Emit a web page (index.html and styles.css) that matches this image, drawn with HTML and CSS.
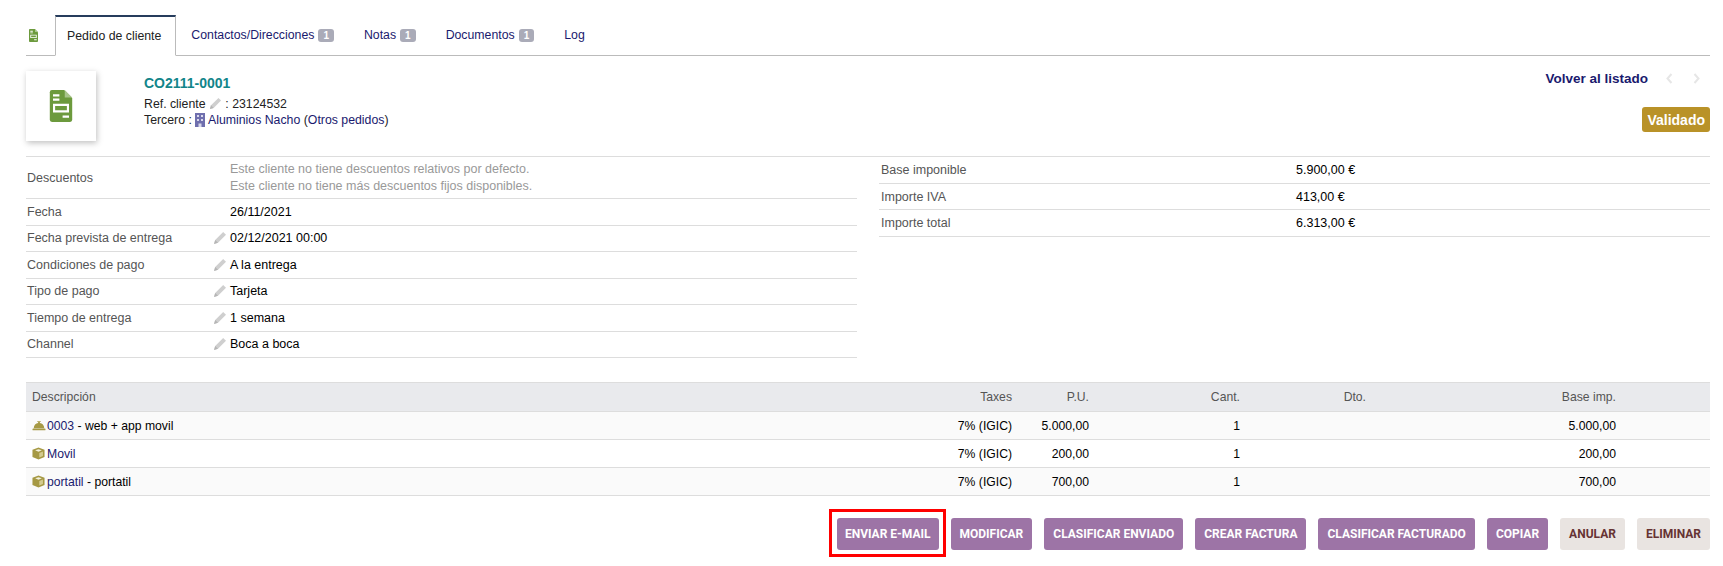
FILE: index.html
```html
<!DOCTYPE html>
<html lang="es">
<head>
    <meta charset="UTF-8">
    <title>CO2111-0001</title>
    <link rel="stylesheet" href="styles.css">
</head>
<body>
    <svg class="sprites" width="0" height="0">
        <symbol id="pencil" viewBox="0 0 14 14"><path d="M10.200 1 13 3.800 5 11.800 1 13 2.200 9Z" fill="#cfcfcf"/><path d="M2.200 9 5 11.800 1 13Z" fill="#b5b5b5"/></symbol>
        <symbol id="cube" viewBox="0 0 14 14"><path d="M7 .5 13.500 3V10.800L7 13.500 .5 10.800V3Z" fill="#a69944"/><path d="M3.400 3.600 7 2.400 10.600 3.600 7 5Z" fill="#f4f1dc"/><path d="M7.800 6.400 11.800 4.900V9.700L7.800 11.400Z" fill="#d4cb90"/></symbol>
        <symbol id="bell" viewBox="0 0 16 12"><path d="M2 9C2 5.600 4.400 3.300 7 3V2H6V1H10V2H9V3C11.600 3.300 14 5.600 14 9Z" fill="#a69944"/><rect x="0.500" y="9.500" width="15" height="2" rx="1" fill="#a69944"/></symbol>
        <symbol id="doc" viewBox="0 0 21 30"><path d="M0 2Q0 0 2 0H13.500L21 7.500V28Q21 30 19 30H2Q0 30 0 28Z" fill="#6c9a3d"/><path d="M14 0 21 7H14Z" fill="#a9c58c"/><path d="M3 4H9V6H3ZM3 8H9V10H3ZM3 13H18V21H3ZM12 24H18V26H12Z" fill="#fff"/><rect x="5" y="15" width="11" height="4" fill="#6c9a3d"/></symbol>
        <symbol id="chevron" viewBox="0 0 7 11"><path d="M5.500 1 1.500 5.500 5.500 10" fill="none" stroke="#e6e6e6" stroke-width="2"/></symbol>
    </svg>

    <main class="page">
        <nav class="tabs">
            <span class="tab-icon"><svg class="icon-tab"><use href="#doc"/></svg></span>
            <a class="tab tab-active">Pedido de cliente</a>
            <a class="tab">Contactos/Direcciones <span class="badge">1</span></a>
            <a class="tab">Notas <span class="badge">1</span></a>
            <a class="tab">Documentos <span class="badge">1</span></a>
            <a class="tab">Log</a>
        </nav>

        <section class="banner">
            <div class="logo-box"><svg class="icon-logo"><use href="#doc"/></svg></div>
            <div class="ref-block">
                <div class="ref-title">CO2111-0001</div>
                <div class="ref-line">Ref. cliente <svg class="icon-pencil"><use href="#pencil"/></svg> : 23124532</div>
                <div class="ref-line">Tercero :
                    <svg class="icon-building" viewBox="0 0 12 14"><rect x="1" width="10" height="14" fill="#6f6fae"/><path d="M3 2h2v2H3zM7 2h2v2H7zM3 6h2v2H3zM7 6h2v2H7zM4.500 10.500h3V14h-3z" fill="#d9d9ec"/></svg>
                    <a class="link">Aluminios Nacho</a> (<a class="link">Otros pedidos</a>)
                </div>
            </div>
            <div class="status-block">
                <div class="back-row">
                    <a class="back-link">Volver al listado</a>
                    <svg class="pager"><use href="#chevron"/></svg>
                    <svg class="pager pager-next"><use href="#chevron"/></svg>
                </div>
                <span class="status">Validado</span>
            </div>
        </section>

        <section class="columns">
            <div class="fields">
                <div class="field field-tall">
                    <span class="field-label">Descuentos</span>
                    <span class="field-value muted">Este cliente no tiene descuentos relativos por defecto.<br>Este cliente no tiene más descuentos fijos disponibles.</span>
                </div>
                <div class="field">
                    <span class="field-label">Fecha</span>
                    <span class="field-value">26/11/2021</span>
                </div>
                <div class="field">
                    <span class="field-label">Fecha prevista de entrega</span>
                    <svg class="icon-edit"><use href="#pencil"/></svg>
                    <span class="field-value">02/12/2021 00:00</span>
                </div>
                <div class="field">
                    <span class="field-label">Condiciones de pago</span>
                    <svg class="icon-edit"><use href="#pencil"/></svg>
                    <span class="field-value">A la entrega</span>
                </div>
                <div class="field">
                    <span class="field-label">Tipo de pago</span>
                    <svg class="icon-edit"><use href="#pencil"/></svg>
                    <span class="field-value">Tarjeta</span>
                </div>
                <div class="field">
                    <span class="field-label">Tiempo de entrega</span>
                    <svg class="icon-edit"><use href="#pencil"/></svg>
                    <span class="field-value">1 semana</span>
                </div>
                <div class="field">
                    <span class="field-label">Channel</span>
                    <svg class="icon-edit"><use href="#pencil"/></svg>
                    <span class="field-value">Boca a boca</span>
                </div>
            </div>

            <div class="totals">
                <div class="total-row"><span class="total-label">Base imponible</span><span>5.900,00 €</span></div>
                <div class="total-row"><span class="total-label">Importe IVA</span><span>413,00 €</span></div>
                <div class="total-row"><span class="total-label">Importe total</span><span>6.313,00 €</span></div>
            </div>
        </section>

        <table class="lines">
            <thead>
                <tr>
                    <th class="col-desc">Descripción</th>
                    <th class="col-tax">Taxes</th>
                    <th class="col-pu">P.U.</th>
                    <th class="col-qty">Cant.</th>
                    <th class="col-dto">Dto.</th>
                    <th class="col-base">Base imp.</th>
                    <th></th>
                </tr>
            </thead>
            <tbody>
                <tr>
                    <td class="col-desc"><svg class="icon-bell"><use href="#bell"/></svg><a class="link">0003</a> - web + app movil</td>
                    <td class="col-tax">7% (IGIC)</td>
                    <td class="col-pu">5.000,00</td>
                    <td class="col-qty">1</td>
                    <td class="col-dto"></td>
                    <td class="col-base">5.000,00</td>
                    <td></td>
                </tr>
                <tr>
                    <td class="col-desc"><svg class="icon-cube"><use href="#cube"/></svg><a class="link">Movil</a></td>
                    <td class="col-tax">7% (IGIC)</td>
                    <td class="col-pu">200,00</td>
                    <td class="col-qty">1</td>
                    <td class="col-dto"></td>
                    <td class="col-base">200,00</td>
                    <td></td>
                </tr>
                <tr>
                    <td class="col-desc"><svg class="icon-cube"><use href="#cube"/></svg><a class="link">portatil</a> - portatil</td>
                    <td class="col-tax">7% (IGIC)</td>
                    <td class="col-pu">700,00</td>
                    <td class="col-qty">1</td>
                    <td class="col-dto"></td>
                    <td class="col-base">700,00</td>
                    <td></td>
                </tr>
            </tbody>
        </table>

        <div class="actions">
            <span class="btn-mark"><a class="btn">ENVIAR E-MAIL</a></span>
            <a class="btn">MODIFICAR</a>
            <a class="btn">CLASIFICAR ENVIADO</a>
            <a class="btn">CREAR FACTURA</a>
            <a class="btn">CLASIFICAR FACTURADO</a>
            <a class="btn">COPIAR</a>
            <a class="btn btn-light">ANULAR</a>
            <a class="btn btn-light">ELIMINAR</a>
        </div>
    </main>
</body>
</html>
```

FILE: styles.css
```css
body {
    margin: 0;
    background-color: #fff;
    color: #222;
    font-family: "Liberation Sans", Arial, sans-serif;
    font-size: 12.5px;
}
.sprites {
    position: absolute;
}
.page {
    box-sizing: border-box;
    min-height: 566px;
    padding: 15px 13px 16px 26px;
}
.link {
    color: #1a1a6e;
}

/* tabs */
.tabs {
    display: flex;
    align-items: stretch;
    height: 40px;
    border-bottom: 1px solid #bbb;
    font-size: 12.3px;
}
.tab-icon {
    display: flex;
    align-items: center;
    width: 29px;
    padding-left: 3px;
    box-sizing: border-box;
}
.icon-tab {
    width: 9px;
    height: 13px;
}
.tab {
    display: flex;
    align-items: center;
    gap: 4px;
    padding: 0 12px;
    margin-right: 6px;
    color: #1a1a6e;
    white-space: nowrap;
}
.tab-active {
    margin-bottom: -1px;
    margin-right: 3px;
    padding: 0 14px 0 11px;
    border: 1px solid #bbb;
    border-top: 2px solid #263c5c;
    border-bottom: 1px solid #fff;
    color: #222;
}
.badge {
    padding: 1px 5px;
    background-color: #aaabb8;
    border-radius: 3px;
    color: #fff;
    font-size: 10px;
    font-weight: bold;
}

/* banner */
.banner {
    display: flex;
    height: 100px;
    border-bottom: 1px solid #ddd;
}
.logo-box {
    display: flex;
    align-items: center;
    justify-content: center;
    width: 70px;
    height: 70px;
    margin-top: 15px;
    box-shadow: 1px 2px 6px rgba(0, 0, 0, 0.25);
}
.icon-logo {
    width: 24px;
    height: 32px;
}
.ref-block {
    flex: 1;
    padding: 19px 0 0 48px;
}
.ref-title {
    margin-bottom: 5px;
    color: #12858a;
    font-size: 14px;
    font-weight: bold;
}
.ref-line {
    font-size: 12.3px;
    line-height: 16px;
}
.icon-pencil {
    width: 13px;
    height: 13px;
    vertical-align: -2px;
}
.icon-building {
    width: 12px;
    height: 14px;
    margin: 0 -1px;
    vertical-align: -3px;
}
.status-block {
    display: flex;
    flex-direction: column;
    align-items: flex-end;
    padding-top: 12px;
}
.back-row {
    display: flex;
    align-items: center;
    height: 20px;
    margin-bottom: 19px;
    padding-right: 10px;
}
.back-link {
    color: #1a1a6e;
    font-size: 13.500px;
    font-weight: bold;
}
.pager {
    width: 7px;
    height: 11px;
    margin-left: 18px;
}
.pager-next {
    transform: scaleX(-1);
    margin-left: 20px;
}
.status {
    display: flex;
    align-items: center;
    height: 25px;
    padding: 0 5px;
    background-color: #b99228;
    border-radius: 3px;
    color: #fff;
    font-size: 14px;
    font-weight: bold;
}

/* field columns */
.columns {
    display: flex;
    gap: 22px;
    height: 225px;
}
.fields, .totals {
    flex: 1;
    align-self: flex-start;
}
.field {
    display: flex;
    align-items: center;
    height: 24.500px;
    border-bottom: 1px solid #ddd;
    padding: 0 0 1px 1px;
}
.field-tall {
    height: 41.300px;
    padding-bottom: 0;
}
.field-label {
    width: 186px;
    color: #555;
}
.icon-edit {
    width: 14px;
    height: 14px;
    margin-right: 3px;
}
.field-value {
    color: #000;
}
.field-tall .field-value, .field:nth-child(2) .field-value {
    margin-left: 17px;
}
.muted {
    color: #999;
    line-height: 17px;
}
.total-row {
    display: flex;
    align-items: center;
    height: 25.700px;
    border-bottom: 1px solid #ddd;
    padding-left: 2px;
    color: #000;
}
.total-label {
    width: 415px;
    color: #555;
}

/* lines table */
.lines {
    width: 100%;
    border-collapse: collapse;
    table-layout: fixed;
    font-size: 12.2px;
}
.lines th {
    height: 28px;
    padding: 0;
    background-color: #e9eaed;
    border-top: 1px solid #ddd;
    border-bottom: 1px solid #ddd;
    color: #555;
    font-weight: normal;
    text-align: right;
}
.lines td {
    height: 27px;
    padding: 0;
    background-color: #fafafa;
    border-bottom: 1px solid #ddd;
    color: #000;
    text-align: right;
}
.lines tbody tr:nth-child(2) td {
    background-color: #fff;
}
.lines .col-desc {
    width: 860px;
    padding-left: 6px;
    box-sizing: border-box;
    text-align: left;
}
.lines .col-tax {
    width: 126px;
}
.lines .col-pu {
    width: 77px;
}
.lines .col-qty {
    width: 151px;
}
.lines .col-dto {
    width: 126px;
}
.lines .col-base {
    width: 250px;
}
.icon-bell {
    width: 14px;
    height: 11px;
    margin-right: 1px;
    vertical-align: -1px;
}
.icon-cube {
    width: 13px;
    height: 13px;
    margin-right: 2px;
    vertical-align: -2px;
}

/* buttons */
.actions {
    display: flex;
    justify-content: flex-end;
    gap: 12px;
    margin-top: 22px;
}
.btn {
    display: flex;
    align-items: center;
    height: 32px;
    padding: 0 9px;
    background-color: #9d74a6;
    border-radius: 3px;
    color: #fff;
    font-family: Roboto, "Liberation Sans", sans-serif;
    font-size: 12px;
    font-weight: bold;
    white-space: nowrap;
}
.btn-light {
    background-color: #e9e4e1;
    color: #633;
}
.btn-mark {
    margin: -9px -7px -7px -8px;
    padding: 6px 4px 4px 5px;
    border: 3px solid #f00;
}
.btn-mark .btn {
    padding: 0 8px;
}
```
